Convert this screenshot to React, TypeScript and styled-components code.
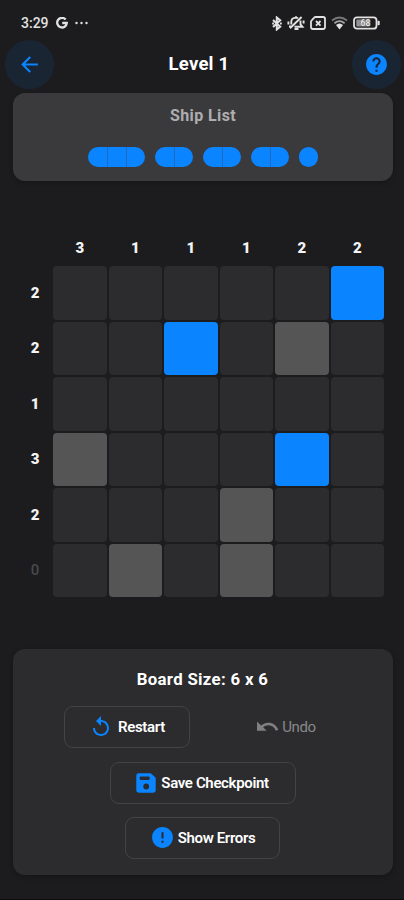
import React from "react";
import styled, { createGlobalStyle } from "styled-components";
import { MdArrowBack, MdHelp, MdReplay, MdError } from "react-icons/md";

const GlobalStyle = createGlobalStyle`
  * { box-sizing: border-box; }
  body { margin: 0; background: #1c1c1e; }
`;

const Screen = styled.main`
  width: 404px;
  height: 900px;
  display: flex;
  flex-direction: column;
  overflow: hidden;
  background: #1c1c1e;
  color: #fff;
  font-family: Roboto, sans-serif;
  border-bottom: 1px solid #0c0c0d;
`;

const StatusBar = styled.div`
  height: 39px;
  flex: none;
  display: flex;
  justify-content: space-between;
  padding: 13px 24px 0 21px;
  color: #e2e2e2;
`;

const StatusGroup = styled.div<{ $gap: number }>`
  display: flex;
  align-items: center;
  gap: ${(p) => p.$gap}px;
  height: 20px;
`;

const Clock = styled.span`
  font-size: 14px;
  line-height: 20px;
  width: 28px;
  font-weight: 500;
`;

const Header = styled.header`
  height: 50px;
  flex: none;
  display: flex;
  align-items: center;
  justify-content: space-between;
  padding: 0 3px 0 5px;
`;

const RoundButton = styled.button`
  width: 49px;
  height: 49px;
  display: flex;
  align-items: center;
  justify-content: center;
  padding: 0;
  border: 0;
  border-radius: 50%;
  background: #1a2534;
  color: #0a84ff;
`;

const Title = styled.h1`
  margin: 0 8px 0 0;
  font-size: 18.5px;
  line-height: 24px;
  font-weight: 700;
  letter-spacing: 0.25px;
`;

const ShipPanel = styled.section`
  flex: none;
  width: 380px;
  height: 88px;
  margin: 4px 0 0 13px;
  padding-top: 13px;
  border-radius: 12px;
  background: #3a3a3c;
  box-shadow: 0 2px 4px rgba(0, 0, 0, 0.2);
  display: flex;
  flex-direction: column;
  align-items: center;
`;

const ShipHeading = styled.h2`
  margin: 0;
  font-size: 16px;
  line-height: 20px;
  font-weight: 700;
  letter-spacing: 0.4px;
  color: #aeaeb0;
`;

const Fleet = styled.div`
  display: flex;
  gap: 10px;
  margin-top: 21px;
`;

const Ship = styled.div`
  display: flex;
  border-radius: 10px;
  overflow: hidden;
`;

const Segment = styled.span`
  width: 19px;
  height: 20px;
  background: #0a84ff;
  & + & {
    border-left: 1px solid #1a6cc2;
  }
`;

const BoardArea = styled.section`
  flex: none;
  display: grid;
  grid-template-columns: 36px 331px;
  grid-template-rows: 36px 331px;
  margin: 49px 0 0 17px;
`;

const ColumnClues = styled.div`
  grid-column: 2;
  display: grid;
  grid-template-columns: repeat(6, 1fr);
  gap: 2px;
  align-items: center;
  justify-items: center;
`;

const RowClues = styled.div`
  display: grid;
  grid-template-rows: repeat(6, 1fr);
  gap: 2px;
  align-items: center;
  justify-items: center;
`;

const Clue = styled.span<{ $muted?: boolean }>`
  font-size: 15px;
  line-height: 18px;
  font-weight: ${(p) => (p.$muted ? 500 : 900)};
  color: ${(p) => (p.$muted ? "#48484a" : "#f4f4f4")};
`;

type CellKind = "empty" | "ship" | "water";
const cellColors: Record<CellKind, string> = {
  empty: "#2c2c2e",
  ship: "#0a84ff",
  water: "#555556",
};

const Board = styled.div`
  display: grid;
  grid-template: repeat(6, 1fr) / repeat(6, 1fr);
  gap: 2px;
`;

const Cell = styled.div<{ $kind: CellKind }>`
  border-radius: 4px;
  background: ${(p) => cellColors[p.$kind]};
`;

const ControlPanel = styled.section`
  flex: none;
  width: 380px;
  height: 226px;
  margin: 52px 0 0 13px;
  padding: 20px 1px 0 0;
  border-radius: 12px;
  background: #2c2c2e;
  box-shadow: 0 2px 5px rgba(0, 0, 0, 0.25);
  display: flex;
  flex-direction: column;
  align-items: center;
`;

const BoardSize = styled.h2`
  margin: 0;
  font-size: 16.8px;
  line-height: 20px;
  font-weight: 700;
  letter-spacing: 0.32px;
`;

const ButtonRow = styled.div<{ $top: number }>`
  display: flex;
  gap: 42px;
  margin-top: ${(p) => p.$top}px;
`;

const ActionButton = styled.button<{ $width: number; $gap: number; $disabled?: boolean }>`
  width: ${(p) => p.$width}px;
  height: 42px;
  display: flex;
  align-items: center;
  justify-content: center;
  gap: ${(p) => p.$gap}px;
  padding: 0 0 1px;
  border: 1px solid ${(p) => (p.$disabled ? "transparent" : "#434345")};
  border-radius: 9px;
  background: transparent;
  font: ${(p) => (p.$disabled ? 400 : 600)} 15px/20px Roboto, sans-serif;
  letter-spacing: -0.35px;
  color: ${(p) => (p.$disabled ? "#88888a" : "#fff")};
  white-space: nowrap;
  & > svg {
    flex: none;
    color: ${(p) => (p.$disabled ? "#808082" : "#0a84ff")};
  }
`;

const GoogleMark = () => (
  <svg width="12" height="12" viewBox="0 0 12 12" fill="none" stroke="currentColor" strokeWidth="2.3">
    <path d="M9.7 2.6A4.8 4.8 0 1 0 10.8 6H6.2" />
  </svg>
);

const Dots = () => (
  <svg width="13" height="4" viewBox="0 0 13 4" fill="currentColor">
    <circle cx="1.5" cy="2" r="1.2" />
    <circle cx="6.5" cy="2" r="1.2" />
    <circle cx="11.5" cy="2" r="1.2" />
  </svg>
);

const BluetoothIcon = () => (
  <svg width="10" height="15" viewBox="0 0 10 15" fill="none" stroke="currentColor" strokeWidth="2">
    <path d="M1 4l7.2 6.8-3.4 2.7V1.5l3.4 2.7L1 11" />
    <path d="M.2 7.5h1.8M8 7.5h1.8" />
  </svg>
);

const MutedBellIcon = () => (
  <svg width="18" height="16" viewBox="0 0 18 16" fill="none" stroke="currentColor" strokeWidth="1.9">
    <path d="M4.3 9.5V6.8q0-3.5 3.5-3.9h3.4M13.5 5.6v3.7l2 2.5H7.5" />
    <path d="M3 13.2L14.6 2M7.5 14h4M1.4 6.5v3M16.6 5.5v3M2 11.5h3M9 1.2v2" />
  </svg>
);

const SimIcon = () => (
  <svg width="16" height="14" viewBox="0 0 16 14" fill="none" stroke="currentColor" strokeWidth="1.8">
    <path d="M5.6 1h7.5q1.9 0 1.9 1.9v8.2q0 1.9-1.9 1.9H2.9Q1 13 1 11.1V6q0-1 .7-1.6l2.5-2.7Q4.8 1 5.6 1z" />
    <path d="M6 5l4.5 4.6M10.5 5L6 9.6" />
  </svg>
);

const WifiIcon = () => (
  <svg width="17" height="14" viewBox="0 0 17 14" fill="none">
    <path d="M1 4.5q7.5-6 15 0" stroke="#777" strokeWidth="1.7" />
    <path d="M3.4 7.2q5.1-4.1 10.2 0" stroke="#a3a3a3" strokeWidth="1.8" />
    <path d="M5 9q3.5-3 7 0l-3.5 4.6z" fill="currentColor" />
  </svg>
);

const BatteryIcon = () => (
  <svg width="27" height="14" viewBox="0 0 27 14" fill="none">
    <rect x="1" y="1.3" width="22.5" height="11.4" rx="3" stroke="currentColor" strokeWidth="1.8" />
    <rect x="3.3" y="3.5" width="14" height="7" rx="1" fill="#929292" />
    <rect x="24.5" y="4.7" width="2.2" height="4.6" rx=".8" fill="currentColor" />
    <text x="12.4" y="10" textAnchor="middle" fontFamily="Roboto, sans-serif" fontSize="8.5" fontWeight="700" fill="#e6e6e6" stroke="#555" strokeWidth=".6" paintOrder="stroke">68</text>
  </svg>
);

const UndoIcon = () => (
  <svg width="22" height="11" viewBox="0 0 22 11" fill="currentColor">
    <path d="M0 .5l4.1 3.9C6 2.9 8.5 1.7 11.5 1.7c4.5 0 8.2 2.7 9.8 7.1l-2.5.9C17.6 6.4 15 4.3 11.5 4.3c-2.2 0-4 .8-5.4 2L9.6 9.8H0z" />
  </svg>
);

const SaveIcon = () => (
  <svg width="20" height="20" viewBox="0 0 20 20">
    <path fill="currentColor" d="M2.5.3h12.3l4.9 4.4v12.6q0 2.4-2.4 2.4H2.7Q.3 19.7.3 17.3V2.7Q.3.3 2.5.3z" />
    <rect x="3.7" y="3.4" width="10" height="3.5" rx="1.2" fill="#2c2c2e" />
    <circle cx="10.2" cy="13.5" r="2.9" fill="#2c2c2e" />
  </svg>
);

const fleet = [3, 2, 2, 2, 1];
const columns = [3, 1, 1, 1, 2, 2];
const rows = [2, 2, 1, 3, 2, 0];
const layout = [".....S", "..S.W.", "......", "W...S.", "...W..", ".W.W.."];
const kindOf = (mark: string): CellKind => (mark === "S" ? "ship" : mark === "W" ? "water" : "empty");

export default function App() {
  return (
    <Screen>
      <GlobalStyle />
      <StatusBar>
        <StatusGroup $gap={7}>
          <Clock>3:29</Clock>
          <GoogleMark />
          <Dots />
        </StatusGroup>
        <StatusGroup $gap={5}>
          <BluetoothIcon />
          <MutedBellIcon />
          <SimIcon />
          <WifiIcon />
          <BatteryIcon />
        </StatusGroup>
      </StatusBar>
      <Header>
        <RoundButton aria-label="Back"><MdArrowBack size={25} /></RoundButton>
        <Title>Level 1</Title>
        <RoundButton aria-label="Help"><MdHelp size={25} /></RoundButton>
      </Header>
      <ShipPanel>
        <ShipHeading>Ship List</ShipHeading>
        <Fleet>
          {fleet.map((length, i) => (
            <Ship key={i}>
              {Array.from({ length }, (_, s) => <Segment key={s} />)}
            </Ship>
          ))}
        </Fleet>
      </ShipPanel>
      <BoardArea>
        <ColumnClues>
          {columns.map((n, i) => <Clue key={i}>{n}</Clue>)}
        </ColumnClues>
        <RowClues>
          {rows.map((n, i) => <Clue key={i} $muted={n === 0}>{n}</Clue>)}
        </RowClues>
        <Board>
          {layout.join("").split("").map((mark, i) => <Cell key={i} $kind={kindOf(mark)} />)}
        </Board>
      </BoardArea>
      <ControlPanel>
        <BoardSize>Board Size: 6 x 6</BoardSize>
        <ButtonRow $top={17}>
          <ActionButton $width={126} $gap={5}><MdReplay size={24} />Restart</ActionButton>
          <ActionButton $width={109} $gap={3} $disabled disabled><UndoIcon />Undo</ActionButton>
        </ButtonRow>
        <ButtonRow $top={14}>
          <ActionButton $width={186} $gap={5}><SaveIcon />Save Checkpoint</ActionButton>
        </ButtonRow>
        <ButtonRow $top={13}>
          <ActionButton $width={155} $gap={3}><MdError size={25} />Show Errors</ActionButton>
        </ButtonRow>
      </ControlPanel>
    </Screen>
  );
}
